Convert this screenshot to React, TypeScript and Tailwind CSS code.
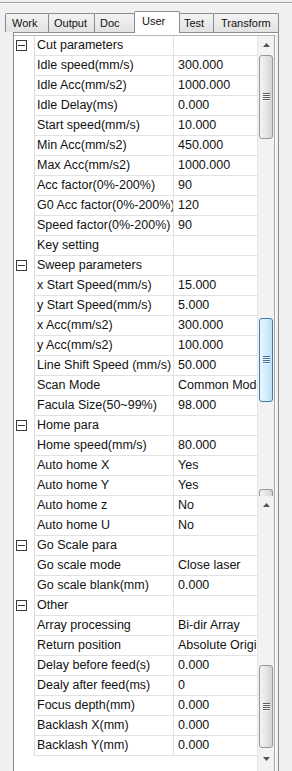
import React from "react";

type Row = { name: string; value?: string; cat?: boolean };

const rows: Row[] = [
  { name: "Cut parameters", cat: true },
  { name: "Idle speed(mm/s)", value: "300.000" },
  { name: "Idle Acc(mm/s2)", value: "1000.000" },
  { name: "Idle Delay(ms)", value: "0.000" },
  { name: "Start speed(mm/s)", value: "10.000" },
  { name: "Min Acc(mm/s2)", value: "450.000" },
  { name: "Max Acc(mm/s2)", value: "1000.000" },
  { name: "Acc factor(0%-200%)", value: "90" },
  { name: "G0 Acc factor(0%-200%)", value: "120" },
  { name: "Speed factor(0%-200%)", value: "90" },
  { name: "Key setting", value: "" },
  { name: "Sweep parameters", cat: true },
  { name: "x Start Speed(mm/s)", value: "15.000" },
  { name: "y Start Speed(mm/s)", value: "5.000" },
  { name: "x Acc(mm/s2)", value: "300.000" },
  { name: "y Acc(mm/s2)", value: "100.000" },
  { name: "Line Shift Speed (mm/s)", value: "50.000" },
  { name: "Scan Mode", value: "Common Mode" },
  { name: "Facula Size(50~99%)", value: "98.000" },
  { name: "Home para", cat: true },
  { name: "Home speed(mm/s)", value: "80.000" },
  { name: "Auto home X", value: "Yes" },
  { name: "Auto home Y", value: "Yes" },
  { name: "Auto home z", value: "No" },
  { name: "Auto home U", value: "No" },
  { name: "Go Scale para", cat: true },
  { name: "Go scale mode", value: "Close laser" },
  { name: "Go scale blank(mm)", value: "0.000" },
  { name: "Other", cat: true },
  { name: "Array processing", value: "Bi-dir Array" },
  { name: "Return position", value: "Absolute Origin" },
  { name: "Delay before feed(s)", value: "0.000" },
  { name: "Dealy after feed(ms)", value: "0" },
  { name: "Focus depth(mm)", value: "0.000" },
  { name: "Backlash X(mm)", value: "0.000" },
  { name: "Backlash Y(mm)", value: "0.000" },
];

const tabs = [
  { label: "Work", cls: "w-[44px] pl-[6px]" },
  { label: "Output", cls: "w-[47px] pl-[5px]" },
  { label: "Doc", cls: "w-[41px] pl-[5px]" },
  { label: "User", cls: "w-[46px] pl-[7px]", active: true },
  { label: "Test", cls: "w-[35px] pl-[4px]" },
  { label: "Transform", cls: "w-[66px] pl-[7px]" },
];

function MinusBox() {
  return (
    <span className="flex h-[11px] w-[11px] items-center justify-center border border-[#3a3a3a] bg-white">
      <span className="h-px w-[7px] bg-[#3a3a3a]" />
    </span>
  );
}

function Arrow({ down }: { down?: boolean }) {
  return (
    <div className="flex h-[18px] items-center justify-center">
      <svg width="7" height="4" viewBox="0 0 7 4">
        <polygon points={down ? "0,0 7,0 3.5,4" : "3.5,0 7,4 0,4"} fill="#555" />
      </svg>
    </div>
  );
}

function Grip({ blue }: { blue?: boolean }) {
  const dark = blue ? "#3f6f94" : "#5c5c5c";
  return (
    <svg width="7" height="8" viewBox="0 0 7 8">
      {[0, 2, 4, 6].map((y) => (
        <g key={y}>
          <line x1="0" x2="7" y1={y + 0.5} y2={y + 0.5} stroke={dark} />
          <line x1="0" x2="7" y1={y + 1.5} y2={y + 1.5} stroke="#fff" strokeOpacity="0.7" />
        </g>
      ))}
    </svg>
  );
}

function Thumb({ h, blue }: { h: string; blue?: boolean }) {
  return (
    <div
      className={`mx-px flex items-center justify-center rounded-[3px] border ${h} ${
        blue
          ? "border-[#3c7fb1] bg-linear-to-r from-[#eaf6fd] via-[#d4edfb] to-[#b9dff7]"
          : "border-[#979797] bg-linear-to-r from-[#f4f4f4] via-[#e6e6e6] to-[#d3d3d3]"
      }`}
    >
      <Grip blue={blue} />
    </div>
  );
}

export default function App() {
  return (
    <div className="flex h-[771px] w-[292px] flex-col overflow-hidden bg-[#f0f0f0] font-['Liberation_Sans',Arial,sans-serif] text-[#111]">
      <div className="mt-[2px] h-px bg-[#a0a0a0]" />
      <div className="h-px bg-white" />

      {/* tab strip */}
      <div className="mt-[7px] flex h-[21px] items-end pl-[5px]">
        {tabs.map((t, i) =>
          t.active ? (
            <div
              key={t.label}
              className={`relative z-10 -mb-px h-[22px] rounded-t-[2px] border border-b-0 border-[#898c95] bg-white text-[11px] leading-[19px] ${t.cls} ${i ? "-ml-px" : ""}`}
            >
              {t.label}
            </div>
          ) : (
            <div
              key={t.label}
              className={`h-[19px] whitespace-nowrap rounded-t-[2px] border border-b-0 border-[#898c95] bg-linear-to-b from-[#f3f3f3] to-[#e2e2e2] text-[11px] leading-[19px] ${t.cls} ${i ? "-ml-px" : ""}`}
            >
              {t.label}
            </div>
          )
        )}
      </div>

      {/* tab page */}
      <div className="ml-[13px] flex min-h-0 w-[266px] flex-1 flex-col border-x border-t border-[#898c95] bg-white pt-[2px]">
        <div className="flex min-h-0 flex-1">
          <div className="flex flex-1 border-t border-[#b9b9b9]">
            <div className="flex w-[243px] flex-col text-[12.5px]">
              {rows.map((r) => (
                <div key={r.name} className="flex h-[20px]">
                  <div className="flex w-[21px] items-start border-r border-[#dcdcdc] pl-[2px] pt-[4px]">
                    {r.cat && <MinusBox />}
                  </div>
                  <div className="w-[139px] overflow-hidden whitespace-nowrap border-r border-b border-[#e2e2e2] pl-[2px] leading-[19px]">
                    {r.name}
                  </div>
                  <div className="w-[83px] overflow-hidden whitespace-nowrap border-b border-[#e2e2e2] pl-[4px] leading-[19px]">
                    {r.value ?? ""}
                  </div>
                </div>
              ))}
            </div>

            {/* scrollbar, stitched from several scroll positions */}
            <div className="flex w-[18px] flex-col border-r border-l border-[#e6e6e6] border-r-[#a8a8a8] bg-[#f2f2f2]">
              <Arrow />
              <div className="h-px" />
              <Thumb h="h-[84px]" />
              <div className="h-[179px]" />
              <Thumb h="h-[84px]" blue />
              <div className="h-[87px]" />
              <div className="mx-px h-[7px] rounded-t-[3px] border border-b-0 border-[#979797] bg-linear-to-r from-[#f4f4f4] to-[#d6d6d6]" />
              <Arrow />
              <div className="h-[151px]" />
              <Thumb h="h-[83px]" />
              <div className="h-[2px]" />
              <Arrow down />
              <div className="flex-1" />
            </div>
          </div>
          <div className="w-[2px] bg-[#f0f0f0]" />
        </div>
      </div>
    </div>
  );
}
